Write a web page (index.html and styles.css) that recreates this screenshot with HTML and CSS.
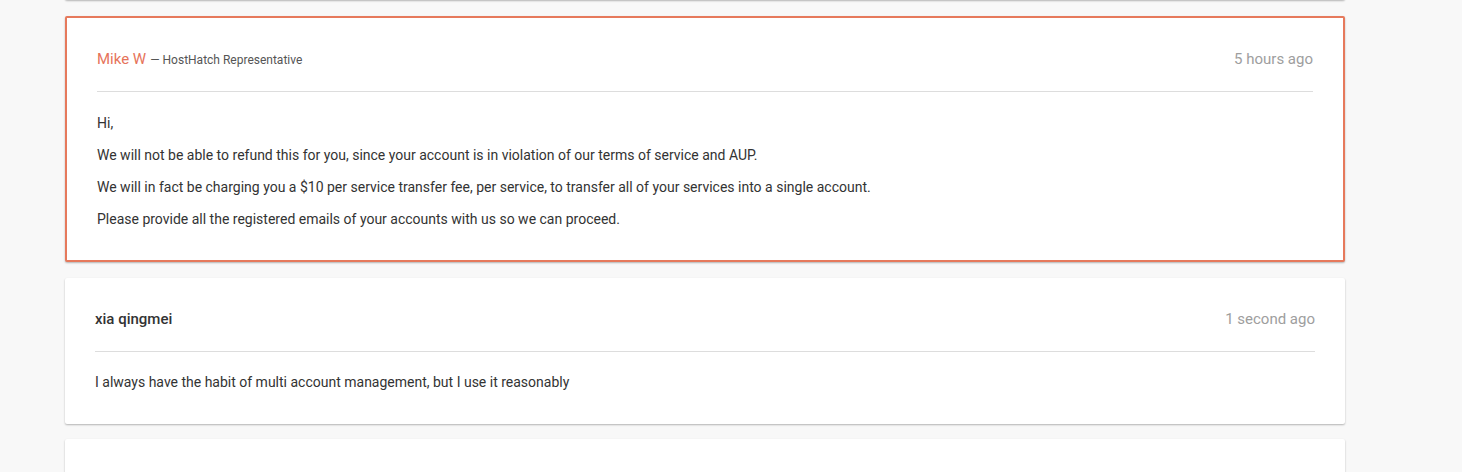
FILE: index.html
```html
<!DOCTYPE html>
<html lang="en">
<head>
<meta charset="utf-8">
<title>Ticket replies</title>
<link rel="stylesheet" href="styles.css">
</head>
<body>
<div class="thread">
  <div class="card card-stub"></div>

  <div class="card card-staff">
    <div class="card-head">
      <div class="author"><span class="name-staff">Mike W</span> <span class="role">— HostHatch Representative</span></div>
      <div class="time">5 hours ago</div>
    </div>
    <div class="card-body">
      <p>Hi,</p>
      <p>We will not be able to refund this for you, since your account is in violation of our terms of service and AUP.</p>
      <p>We will in fact be charging you a $10 per service transfer fee, per service, to transfer all of your services into a single account.</p>
      <p>Please provide all the registered emails of your accounts with us so we can proceed.</p>
    </div>
  </div>

  <div class="card">
    <div class="card-head">
      <div class="author"><span class="name-user">xia qingmei</span></div>
      <div class="time">1 second ago</div>
    </div>
    <div class="card-body card-body-user">
      <p>I always have the habit of multi account management, but I use it reasonably</p>
    </div>
  </div>

  <div class="card card-tail"></div>
</div>
</body>
</html>
```

FILE: styles.css
```css
html, body {
  margin: 0;
  padding: 0;
  background: #f8f8f8;
  font-family: Roboto, "Liberation Sans", Arial, sans-serif;
  color: #333;
  overflow: hidden;
}

.thread {
  width: 1280px;
  margin-left: 65px;
  margin-top: -40px;
  display: flex;
  flex-direction: column;
  gap: 16px;
}

.card {
  background: #fff;
  border-radius: 2px;
  box-shadow: 0 1px 2px rgba(0, 0, 0, 0.28);
  padding: 30px;
}

.card-stub {
  height: 40px;
  padding: 0;
}

.card-tail {
  height: 80px;
  margin-top: -1px;
}

.card-staff {
  border: 2px solid #e6795c;
}

.card-head {
  display: flex;
  justify-content: space-between;
  align-items: center;
  height: 22px;
  padding-bottom: 21px;
  border-bottom: 1px solid #dddddd;
}

.author {
  display: flex;
  align-items: baseline;
  gap: 4px;
}

.name-staff {
  color: #e6735a;
  font-size: 15px;
}

.role {
  font-size: 12px;
  color: #555;
}

.name-user {
  font-size: 15px;
  font-weight: 500;
  color: #333;
}

.time {
  font-size: 15px;
  color: #9e9e9e;
}

.card-body {
  padding-top: 20px;
}

.card-body-user {
  padding-top: 19px;
  padding-bottom: 1px;
}

.card-body p {
  margin: 0 0 10px;
  font-size: 14px;
  line-height: 22px;
}

.card-body p:last-child {
  margin-bottom: 0;
}
```
